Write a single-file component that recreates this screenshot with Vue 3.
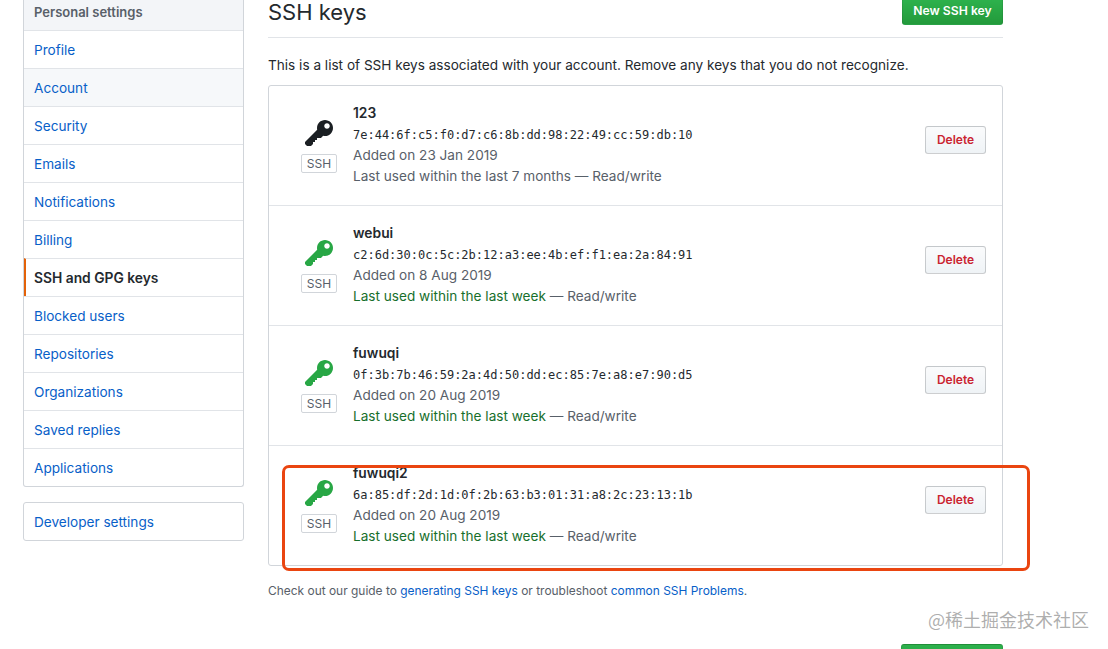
<script setup>
const menu = [
  { label: 'Profile' },
  { label: 'Account', tinted: true },
  { label: 'Security' },
  { label: 'Emails' },
  { label: 'Notifications' },
  { label: 'Billing' },
  { label: 'SSH and GPG keys', selected: true },
  { label: 'Blocked users' },
  { label: 'Repositories' },
  { label: 'Organizations' },
  { label: 'Saved replies' },
  { label: 'Applications' }
]

const keys = [
  { name: '123', print: '7e:44:6f:c5:f0:d7:c6:8b:dd:98:22:49:cc:59:db:10', added: '23 Jan 2019', used: 'Last used within the last 7 months', recent: false },
  { name: 'webui', print: 'c2:6d:30:0c:5c:2b:12:a3:ee:4b:ef:f1:ea:2a:84:91', added: '8 Aug 2019', used: 'Last used within the last week', recent: true },
  { name: 'fuwuqi', print: '0f:3b:7b:46:59:2a:4d:50:dd:ec:85:7e:a8:e7:90:d5', added: '20 Aug 2019', used: 'Last used within the last week', recent: true },
  { name: 'fuwuqi2', print: '6a:85:df:2d:1d:0f:2b:63:b3:01:31:a8:2c:23:13:1b', added: '20 Aug 2019', used: 'Last used within the last week', recent: true }
]
</script>

<template>
  <div class="page">
    <aside class="side">
      <nav class="menu">
        <div class="menu-head">Personal settings</div>
        <a
          v-for="m in menu"
          :key="m.label"
          class="menu-item"
          :class="{ tinted: m.tinted, selected: m.selected }"
        >{{ m.label }}</a>
      </nav>
      <nav class="menu dev">
        <a class="menu-item">Developer settings</a>
      </nav>
    </aside>

    <main class="main">
      <div class="head">
        <h2>SSH keys</h2>
        <button class="btn-green top">New SSH key</button>
      </div>
      <p class="intro">This is a list of SSH keys associated with your account. Remove any keys that you do not recognize.</p>

      <div class="box">
        <div v-for="k in keys" :key="k.name" class="row">
          <div class="kind">
            <svg class="key" :class="{ on: k.recent }" viewBox="0 0 14 16" width="28" height="32">
              <path fill-rule="evenodd" d="M12.83 2.17C12.08 1.42 11.14 1.03 10 1c-1.13.03-2.08.42-2.83 1.17S6.04 3.86 6.01 5c0 .3.03.59.09.89L0 12v1l1 1h2l1-1v-1h1v-1h1v-1h2l1.09-1.11c.3.08.59.11.91.11 1.14-.03 2.08-.42 2.83-1.17S13.97 6.14 14 5c-.03-1.14-.42-2.08-1.17-2.83zM11 5.38c-.77 0-1.38-.61-1.38-1.38 0-.77.61-1.38 1.38-1.38.77 0 1.38.61 1.38 1.38 0 .77-.61 1.38-1.38 1.38z" />
            </svg>
            <span class="tag">SSH</span>
          </div>
          <div class="info">
            <strong>{{ k.name }}</strong>
            <code>{{ k.print }}</code>
            <span>Added on {{ k.added }}</span>
            <span><span :class="{ recent: k.recent }">{{ k.used }}</span> — Read/write</span>
          </div>
          <button class="btn-del">Delete</button>
        </div>
      </div>

      <p class="note">Check out our guide to <a>generating SSH keys</a> or troubleshoot <a>common SSH Problems</a>.</p>

      <div class="foot">
        <button class="btn-green low"></button>
      </div>
    </main>

    <div class="mark"></div>
    <div class="watermark">@稀土掘金技术社区</div>
  </div>
</template>

<style>
html, body { background: #fff; }
</style>

<style scoped>
.page {
  position: relative;
  width: 1108px;
  height: 649px;
  overflow: hidden;
  display: flex;
  align-items: flex-start;
  padding-left: 23px;
  box-sizing: border-box;
  font-family: Inter, "Liberation Sans", sans-serif;
  font-size: 13.6px;
  line-height: 21px;
  color: #24292e;
  background: #fff;
}
.side {
  width: 221px;
  margin-right: 24px;
  flex: none;
}
.menu {
  border: 1px solid #d1d5da;
  border-top: 0;
  border-radius: 0 0 3px 3px;
  background: #fff;
}
.menu-head {
  height: 30px;
  padding: 2px 10px 0;
  box-sizing: border-box;
  background: #f3f5f8;
  font-size: 13px;
  font-weight: 600;
  color: #586069;
}
.menu-item {
  display: block;
  height: 38px;
  padding: 9px 10px 0;
  box-sizing: border-box;
  border-top: 1px solid #e1e4e8;
  color: #0860c8;
}
.menu-item.tinted { background: #f6f8fa; }
.menu-item.selected {
  font-size: 13.8px;
  font-weight: 600;
  color: #24292e;
  border-left: 2px solid #e36209;
  padding-left: 8px;
}
.dev {
  margin-top: 15px;
  border-top: 1px solid #d1d5da;
  border-radius: 3px;
}
.dev .menu-item {
  height: 37px;
  border-top: 0;
}
.main {
  width: 735px;
  flex: none;
}
.head {
  display: flex;
  justify-content: space-between;
  align-items: flex-start;
  height: 37px;
  border-bottom: 1px solid #e1e4e8;
}
.head h2 {
  margin: 0;
  font-size: 22px;
  line-height: 24px;
  font-weight: 400;
}
.btn-green {
  width: 102px;
  height: 28px;
  padding: 0;
  font-family: inherit;
  font-size: 12.2px;
  font-weight: 600;
  color: #fff;
  background: linear-gradient(#2db14c, #239a3b);
  border: 1px solid rgba(27, 31, 35, .1);
  border-radius: 3px;
}
.btn-green.top {
  width: 101px;
  height: 25px;
  padding-bottom: 3px;
  border-radius: 0 0 3px 3px;
  border-top: 0;
}
.intro {
  margin: 17px 0 9px;
}
.box {
  border: 1px solid #d1d5da;
  border-radius: 3px;
}
.row {
  display: flex;
  height: 120px;
  box-sizing: border-box;
  padding: 17px 16px 0 32px;
  border-top: 1px solid #e1e4e8;
}
.row:first-child {
  height: 119px;
  border-top: 0;
}
.kind {
  width: 36px;
  margin-right: 16px;
  flex: none;
  display: flex;
  flex-direction: column;
  align-items: center;
}
.key {
  display: block;
  margin-top: 15px;
  fill: #1b1f23;
}
.key.on { fill: #28a745; }
.tag {
  margin-top: 4px;
  width: 36px;
  height: 19px;
  box-sizing: border-box;
  border: 1px solid #d1d5da;
  border-radius: 2px;
  font-size: 12px;
  line-height: 17px;
  text-align: center;
  color: #586069;
}
.info {
  flex: 1;
  display: flex;
  flex-direction: column;
  color: #586069;
}
.info strong {
  font-size: 13.8px;
  font-weight: 600;
  color: #24292e;
}
.info code {
  height: 21px;
  font-family: "DejaVu Sans Mono", monospace;
  font-size: 12px;
  line-height: 23px;
  color: #24292e;
}
.recent { color: #176f2c; }
.btn-del {
  width: 61px;
  height: 28px;
  margin-top: 23px;
  padding: 0 0 2px;
  font-family: inherit;
  font-size: 12px;
  font-weight: 600;
  color: #cb2431;
  background: linear-gradient(#fafbfc, #eff3f6);
  border: 1px solid rgba(27, 31, 35, .2);
  border-radius: 3px;
}
.note {
  margin: 16px 0 0;
  font-size: 11.95px;
  line-height: 18px;
  color: #586069;
}
.note a { color: #0860c8; }
.foot {
  display: flex;
  justify-content: flex-end;
  margin-top: 44px;
}
.mark {
  position: absolute;
  left: 282px;
  top: 465px;
  width: 748px;
  height: 106px;
  box-sizing: border-box;
  border: 3px solid #ea4510;
  border-radius: 7px;
}
.watermark {
  position: absolute;
  left: 928px;
  top: 607px;
  font-family: "Noto Sans CJK SC", sans-serif;
  font-size: 18px;
  line-height: 24px;
  color: rgba(120, 120, 120, .6);
  white-space: nowrap;
}
</style>
